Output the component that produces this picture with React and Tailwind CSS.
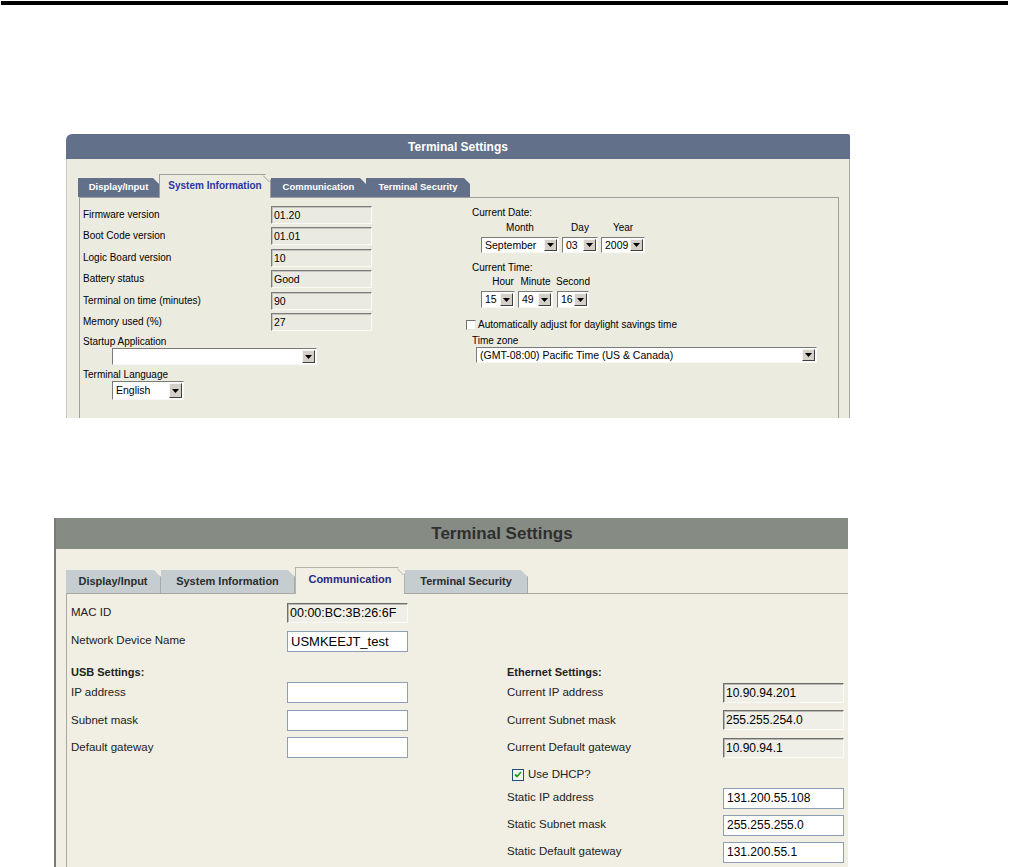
import React from 'react';

// small down-arrow button used by the classic selects
const DropArrow = () => (
    <span className="flex w-[13px] shrink-0 items-center justify-center border border-t-[#f4f4f0] border-l-[#f4f4f0] border-b-[#404040] border-r-[#404040] bg-[#d4d0c8]">
        <svg width="7" height="4" viewBox="0 0 7 4">
            <path d="M0 0h7L3.5 4z" fill="#000" />
        </svg>
    </span>
);

const Select = ({ value, className }) => (
    <div className={`flex items-stretch border border-t-[#7a7a7a] border-l-[#7a7a7a] border-b-[#f8f8f4] border-r-[#f8f8f4] bg-white p-px ${className}`}>
        <span className="flex flex-1 items-center overflow-hidden whitespace-nowrap pl-[2px] text-[10.5px] leading-none text-black">{value}</span>
        <DropArrow />
    </div>
);

const InfoRow = ({ label, value }) => (
    <div className="grid h-[21.5px] grid-cols-[188px_101px] items-center">
        <span className="text-[10px] leading-none">{label}</span>
        <div className="flex h-[18px] items-center border border-t-[#7c7c7c] border-l-[#7c7c7c] border-b-[#fbfbf6] border-r-[#fbfbf6] bg-[#ebeae0] pl-[2px] text-[10.5px] leading-none shadow-[inset_1px_1px_0_#c4c4bc]">
            {value}
        </div>
    </div>
);

const CornerLine = ({ color }) => (
    <svg className="absolute right-0 top-0" width="7" height="7" viewBox="0 0 7 7">
        <path d="M0 0.5L6.5 7" stroke={color} strokeWidth="1" />
    </svg>
);

const SysTab = ({ label, className }) => (
    <div className={`flex h-[19px] items-center justify-center bg-[#627089] text-[9.5px] font-bold text-white [clip-path:polygon(0_0,calc(100%_-_6px)_0,100%_6px,100%_100%,0_100%)] ${className}`}>
        {label}
    </div>
);

const SystemPanel = () => (
    <div className="ml-[66px] mt-[129px] flex h-[284px] w-[784px] flex-col">
        {/* Header */}
        <div className="flex h-[25px] items-center justify-center rounded-tl-[6px] rounded-tr-[2px] bg-[#627089] text-[12px] font-bold text-white">
            Terminal Settings
        </div>

        <div className="flex flex-1 flex-col border-l border-r border-l-[#c8c8c0] border-r-[#a8a8a0] bg-[#ecebe0] pt-[15px]">
            {/* Tabs */}
            <div className="ml-[11px] flex h-[23px] items-end">
                <SysTab label="Display/Input" className="w-[81px]" />
                <div className="relative z-10 -mb-px flex h-[24px] w-[112px] items-center justify-center border-l border-r border-t border-[#a0a0a0] bg-[#ecebe0] pb-[2px] text-[10px] font-bold text-[#2a36a4] [clip-path:polygon(0_0,calc(100%_-_6px)_0,100%_6px,100%_100%,0_100%)]">
                    System Information
                    <CornerLine color="#a0a0a0" />
                </div>
                <SysTab label="Communication" className="w-[95px]" />
                <SysTab label="Terminal Security" className="w-[104px]" />
            </div>

            {/* Tab content */}
            <div className="ml-[12px] flex w-[760px] flex-1 border-l border-r border-t border-[#a0a0a0]">
                <div className="w-[392px] pl-[3px] pt-[6px]">
                    <InfoRow label="Firmware version" value="01.20" />
                    <InfoRow label="Boot Code version" value="01.01" />
                    <InfoRow label="Logic Board version" value="10" />
                    <InfoRow label="Battery status" value="Good" />
                    <InfoRow label="Terminal on time (minutes)" value="90" />
                    <InfoRow label="Memory used (%)" value="27" />

                    <div className="mt-[3px] h-[12px] text-[10px] leading-[12px]">Startup Application</div>
                    <Select value="" className="ml-[29px] h-[17px] w-[205px]" />
                    <div className="mt-[4px] h-[12px] text-[10px] leading-[12px]">Terminal Language</div>
                    <Select value="English" className="ml-[29px] h-[19px] w-[72px]" />
                </div>

                <div className="flex-1 pt-[9px] text-[10px]">
                    <div className="h-[12px] leading-[12px]">Current Date:</div>
                    <div className="ml-[9px] mt-[3px] flex gap-[3px]">
                        <div className="flex w-[78px] flex-col items-center gap-[3px]">
                            <span className="h-[12px] leading-[12px]">Month</span>
                            <Select value="September" className="h-[16px] w-[78px]" />
                        </div>
                        <div className="flex w-[36px] flex-col items-center gap-[3px]">
                            <span className="h-[12px] leading-[12px]">Day</span>
                            <Select value="03" className="h-[16px] w-[36px]" />
                        </div>
                        <div className="flex w-[44px] flex-col items-center gap-[3px]">
                            <span className="h-[12px] leading-[12px]">Year</span>
                            <Select value="2009" className="h-[16px] w-[44px]" />
                        </div>
                    </div>

                    <div className="mt-[9px] h-[12px] leading-[12px]">Current Time:</div>
                    <div className="ml-[9px] mt-[2px] flex gap-[3px]">
                        <div className="flex w-[34px] flex-col items-center gap-[3px]">
                            <span className="h-[12px] pl-[10px] leading-[12px]">Hour</span>
                            <Select value="15" className="h-[17px] w-[34px]" />
                        </div>
                        <div className="flex w-[35px] flex-col items-center gap-[3px]">
                            <span className="h-[12px] leading-[12px]">Minute</span>
                            <Select value="49" className="h-[17px] w-[35px]" />
                        </div>
                        <div className="ml-px flex w-[32px] flex-col items-center gap-[3px]">
                            <span className="h-[12px] leading-[12px]">Second</span>
                            <Select value="16" className="h-[17px] w-[32px]" />
                        </div>
                    </div>

                    <div className="-ml-[6px] mt-[11px] flex h-[12px] items-center gap-[2px]">
                        <span className="h-[10px] w-[10px] border border-t-[#707070] border-l-[#707070] border-b-[#e8e8e0] border-r-[#e8e8e0] bg-white" />
                        <span className="leading-[12px]">Automatically adjust for daylight savings time</span>
                    </div>

                    <div className="mt-[4px] h-[12px] leading-[12px]">Time zone</div>
                    <Select value="(GMT-08:00) Pacific Time (US & Canada)" className="ml-[4px] h-[16px] w-[341px]" />
                </div>
            </div>
        </div>
    </div>
);

const CommTab = ({ label, className }) => (
    <div className={`flex h-[23px] items-center justify-center border-r border-[#a4acaf] bg-[#c5cdd1] text-[11px] font-bold text-[#2c2c2c] [clip-path:polygon(0_0,calc(100%_-_7px)_0,100%_7px,100%_100%,0_100%)] ${className}`}>
        {label}
    </div>
);

const ReadBox = ({ value, className }) => (
    <div className={`flex h-[20px] w-[121px] items-center border border-t-[#6e6e6e] border-l-[#6e6e6e] border-b-[#fafaf6] border-r-[#fafaf6] bg-[#efeee7] pl-[2px] leading-none shadow-[inset_1px_1px_0_#b8b8b0] ${className}`}>
        {value}
    </div>
);

const EditBox = ({ value, className }) => (
    <div className={`flex h-[21px] w-[121px] items-center border border-[#8d9fb4] bg-white pl-[3px] leading-none ${className}`}>
        {value}
    </div>
);

const NetRow = ({ label, children, className }) => (
    <div className={`grid grid-cols-[216px_121px] items-center ${className}`}>
        <span className="text-[11.5px] leading-none text-[#222]">{label}</span>
        {children}
    </div>
);

const CommPanel = () => (
    <div className="ml-[54px] mt-[100px] flex h-[350px] w-[794px] flex-col border-l-2 border-[#7a7a72]">
        {/* Header */}
        <div className="flex h-[31px] items-center justify-center bg-[#868b84] pl-[100px] text-[17px] font-bold text-[#2f2f2f]">
            Terminal Settings
        </div>

        <div className="flex flex-1 flex-col bg-[#f1efe4]">
            {/* Tabs */}
            <div className="ml-[10px] mt-[18px] flex h-[26px] items-end">
                <CommTab label="Display/Input" className="w-[95px]" />
                <CommTab label="System Information" className="w-[134px]" />
                <div className="relative z-10 -mb-px flex h-[27px] w-[110px] items-center justify-center border-l border-r border-t border-[#b4b4ac] bg-[#f1efe4] pb-[3px] text-[11px] font-bold text-[#2a2a7e] [clip-path:polygon(0_0,calc(100%_-_7px)_0,100%_7px,100%_100%,0_100%)]">
                    Communication
                    <CornerLine color="#b4b4ac" />
                </div>
                <CommTab label="Terminal Security" className="w-[123px]" />
            </div>

            {/* Tab content */}
            <div className="ml-[10px] flex-1 border-l border-t border-[#a8a8a0] pl-[4px] pt-[5px]">
                <NetRow label="MAC ID" className="h-[28px]">
                    <ReadBox value="00:00:BC:3B:26:6F" className="text-[12.5px]" />
                </NetRow>
                <NetRow label="Network Device Name" className="h-[28px]">
                    <EditBox value="USMKEEJT_test" className="text-[13px]" />
                </NetRow>

                <div className="flex">
                    {/* USB */}
                    <div className="w-[436px]">
                        <div className="mt-[10px] h-[14px] text-[11px] font-bold leading-[14px] text-[#222]">USB Settings:</div>
                        <NetRow label="IP address" className="h-[27.5px]">
                            <EditBox value="" />
                        </NetRow>
                        <NetRow label="Subnet mask" className="h-[27.5px]">
                            <EditBox value="" />
                        </NetRow>
                        <NetRow label="Default gateway" className="h-[27.5px]">
                            <EditBox value="" />
                        </NetRow>
                    </div>

                    {/* Ethernet */}
                    <div className="flex-1">
                        <div className="mt-[10px] h-[14px] text-[11px] font-bold leading-[14px] text-[#222]">Ethernet Settings:</div>
                        <NetRow label="Current IP address" className="h-[27.5px]">
                            <ReadBox value="10.90.94.201" className="text-[12px]" />
                        </NetRow>
                        <NetRow label="Current Subnet mask" className="h-[27.5px]">
                            <ReadBox value="255.255.254.0" className="text-[12px]" />
                        </NetRow>
                        <NetRow label="Current Default gateway" className="h-[27.5px]">
                            <ReadBox value="10.90.94.1" className="text-[12px]" />
                        </NetRow>

                        <div className="flex h-[23px] items-center gap-[4px] pl-[5px] pt-[3px]">
                            <span className="flex h-[12px] w-[12px] items-center justify-center border border-[#1c5180] bg-[#f4f4ee]">
                                <svg width="8" height="7" viewBox="0 0 8 7">
                                    <path d="M1 3.5L3 5.5L7 1" stroke="#21a121" strokeWidth="1.8" fill="none" />
                                </svg>
                            </span>
                            <span className="text-[11.5px] leading-none text-[#222]">Use DHCP?</span>
                        </div>

                        <NetRow label="Static IP address" className="h-[27px]">
                            <EditBox value="131.200.55.108" className="text-[12px]" />
                        </NetRow>
                        <NetRow label="Static Subnet mask" className="h-[27px]">
                            <EditBox value="255.255.255.0" className="text-[12px]" />
                        </NetRow>
                        <NetRow label="Static Default gateway" className="h-[27px]">
                            <EditBox value="131.200.55.1" className="text-[12px]" />
                        </NetRow>
                    </div>
                </div>
            </div>
        </div>
    </div>
);

export default function App() {
    return (
        <div className="h-[867px] w-[1009px] overflow-hidden bg-white font-['Liberation_Sans',Arial,sans-serif] text-black">
            <div className="ml-px mt-px h-[4px] w-[1007px] bg-black" />
            <SystemPanel />
            <CommPanel />
        </div>
    );
}
